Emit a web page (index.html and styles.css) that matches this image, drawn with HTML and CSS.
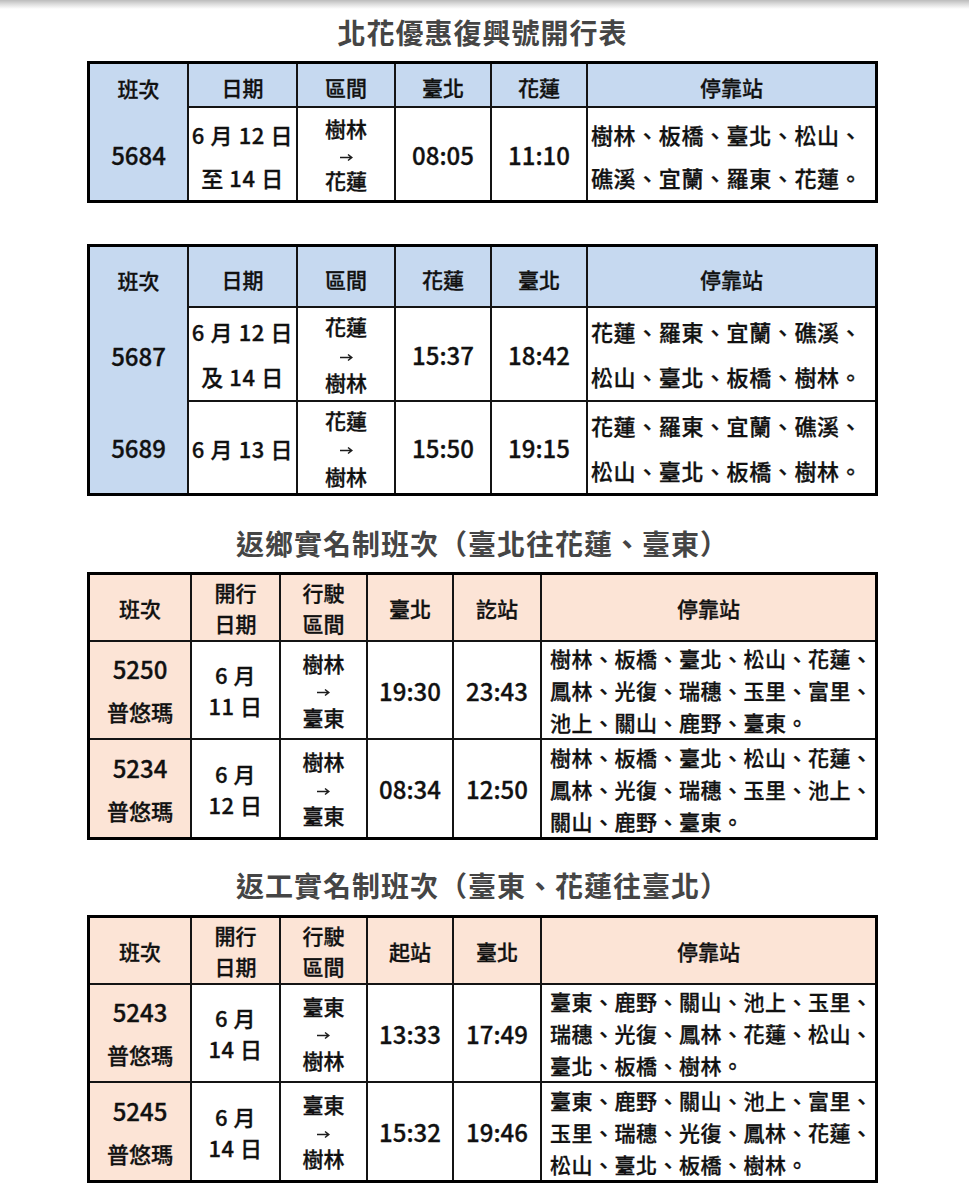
FILE: index.html
```html
<!DOCTYPE html>
<html lang="zh-Hant">
<head>
<meta charset="utf-8">
<title>北花優惠復興號開行表</title>
<link rel="stylesheet" href="styles.css">
</head>
<body>
<div class="page">
  <h1 class="title title-first">北花優惠復興號開行表</h1>
  <table class="tt blue t1">
    <tr class="hr">
      <th class="a1 nob">班次</th><th class="a2">日期</th><th class="a3">區間</th><th class="a4">臺北</th><th class="a5">花蓮</th><th class="a6">停靠站</th>
    </tr>
    <tr class="r93">
      <td class="num">5684</td>
      <td class="date lh43">6 月 12 日<br>至 14 日</td>
      <td class="route lh26">樹林<br><svg class="arr" width="13" height="9" viewBox="0 0 13 9"><path d="M0 4.5H11.5M8 1.5L11.8 4.5L8 7.5" fill="none" stroke="#1c1c1c" stroke-width="1.5"/></svg><br>花蓮</td>
      <td class="time">08:05</td>
      <td class="time">11:10</td>
      <td class="stops lh43">樹林、板橋、臺北、松山、<br>礁溪、宜蘭、羅東、花蓮。</td>
    </tr>
  </table>

  <table class="tt blue t2">
    <tr class="hr2">
      <th class="a1 nob">班次</th><th class="a2">日期</th><th class="a3">區間</th><th class="a4">花蓮</th><th class="a5">臺北</th><th class="a6">停靠站</th>
    </tr>
    <tr class="r94">
      <td class="num nob">5687</td>
      <td class="date2b lh45">6 月 12 日<br>及 14 日</td>
      <td class="route lh28">花蓮<br><svg class="arr" width="13" height="9" viewBox="0 0 13 9"><path d="M0 4.5H11.5M8 1.5L11.8 4.5L8 7.5" fill="none" stroke="#1c1c1c" stroke-width="1.5"/></svg><br>樹林</td>
      <td class="time">15:37</td>
      <td class="time">18:42</td>
      <td class="stops stops-t2 lh45">花蓮、羅東、宜蘭、礁溪、<br>松山、臺北、板橋、樹林。</td>
    </tr>
    <tr class="r91">
      <td class="num">5689</td>
      <td class="date2b">6 月 13 日</td>
      <td class="route lh28">花蓮<br><svg class="arr" width="13" height="9" viewBox="0 0 13 9"><path d="M0 4.5H11.5M8 1.5L11.8 4.5L8 7.5" fill="none" stroke="#1c1c1c" stroke-width="1.5"/></svg><br>樹林</td>
      <td class="time">15:50</td>
      <td class="time">19:15</td>
      <td class="stops stops-t2 lh45">花蓮、羅東、宜蘭、礁溪、<br>松山、臺北、板橋、樹林。</td>
    </tr>
  </table>

  <h2 class="title title-second">返鄉實名制班次（臺北往花蓮、臺東）</h2>
  <table class="tt peach">
    <tr class="hr3">
      <th class="b1">班次</th><th class="b2 lh31">開行<br>日期</th><th class="b3 lh31">行駛<br>區間</th><th class="b4">臺北</th><th class="b5">訖站</th><th class="b6">停靠站</th>
    </tr>
    <tr class="r98">
      <td class="num2"><span class="n">5250</span><span class="k">普悠瑪</span></td>
      <td class="date2 lh31">6 月<br>11 日</td>
      <td class="route lh27">樹林<br><svg class="arr" width="13" height="9" viewBox="0 0 13 9"><path d="M0 4.5H11.5M8 1.5L11.8 4.5L8 7.5" fill="none" stroke="#1c1c1c" stroke-width="1.5"/></svg><br>臺東</td>
      <td class="time">19:30</td>
      <td class="time">23:43</td>
      <td class="stops2">樹林、板橋、臺北、松山、花蓮、<br>鳳林、光復、瑞穗、玉里、富里、<br>池上、關山、鹿野、臺東。</td>
    </tr>
    <tr class="r97">
      <td class="num2"><span class="n">5234</span><span class="k">普悠瑪</span></td>
      <td class="date2 lh31">6 月<br>12 日</td>
      <td class="route lh27">樹林<br><svg class="arr" width="13" height="9" viewBox="0 0 13 9"><path d="M0 4.5H11.5M8 1.5L11.8 4.5L8 7.5" fill="none" stroke="#1c1c1c" stroke-width="1.5"/></svg><br>臺東</td>
      <td class="time">08:34</td>
      <td class="time">12:50</td>
      <td class="stops2">樹林、板橋、臺北、松山、花蓮、<br>鳳林、光復、瑞穗、玉里、池上、<br>關山、鹿野、臺東。</td>
    </tr>
  </table>

  <h2 class="title title-third">返工實名制班次（臺東、花蓮往臺北）</h2>
  <table class="tt peach">
    <tr class="hr3">
      <th class="b1">班次</th><th class="b2 lh31">開行<br>日期</th><th class="b3 lh31">行駛<br>區間</th><th class="b4">起站</th><th class="b5">臺北</th><th class="b6">停靠站</th>
    </tr>
    <tr class="r98">
      <td class="num2"><span class="n">5243</span><span class="k">普悠瑪</span></td>
      <td class="date2 lh31">6 月<br>14 日</td>
      <td class="route lh27">臺東<br><svg class="arr" width="13" height="9" viewBox="0 0 13 9"><path d="M0 4.5H11.5M8 1.5L11.8 4.5L8 7.5" fill="none" stroke="#1c1c1c" stroke-width="1.5"/></svg><br>樹林</td>
      <td class="time">13:33</td>
      <td class="time">17:49</td>
      <td class="stops2">臺東、鹿野、關山、池上、玉里、<br>瑞穗、光復、鳳林、花蓮、松山、<br>臺北、板橋、樹林。</td>
    </tr>
    <tr class="r97">
      <td class="num2"><span class="n">5245</span><span class="k">普悠瑪</span></td>
      <td class="date2 lh31">6 月<br>14 日</td>
      <td class="route lh27">臺東<br><svg class="arr" width="13" height="9" viewBox="0 0 13 9"><path d="M0 4.5H11.5M8 1.5L11.8 4.5L8 7.5" fill="none" stroke="#1c1c1c" stroke-width="1.5"/></svg><br>樹林</td>
      <td class="time">15:32</td>
      <td class="time">19:46</td>
      <td class="stops2">臺東、鹿野、關山、池上、富里、<br>玉里、瑞穗、光復、鳳林、花蓮、<br>松山、臺北、板橋、樹林。</td>
    </tr>
  </table>
</div>
</body>
</html>
```

FILE: styles.css
```css
html, body {
  margin: 0;
  padding: 0;
  background: #fff;
}
body {
  background: linear-gradient(#bcbcbc 0px, #dcdcdc 4px, #ffffff 9px) no-repeat;
  background-size: 100% 10px;
  background-color: #fff;
  font-family: "Noto Sans CJK TC", "Noto Sans CJK SC", sans-serif;
  color: #111;
  min-height: 1200px;
}
.page {
  width: 791px;
  margin-left: 87px;
  padding-top: 17px;
}
.title {
  margin: 0;
  height: 30px;
  line-height: 30px;
  font-size: 28px;
  font-weight: 700;
  letter-spacing: 1px;
  color: #454545;
  text-align: center;
  white-space: nowrap;
}
.title-first { margin-bottom: 14px; }
.title-second { margin-top: 32px; margin-bottom: 14px; }
.title-third { margin-top: 30px; margin-bottom: 15px; }

.tt {
  width: 791px;
  border: 3px solid #000;
  border-collapse: separate;
  border-spacing: 0;
  table-layout: fixed;
  box-sizing: border-box;
}
.t2 { margin-top: 41px; }
.tt th, .tt td {
  box-sizing: border-box;
  padding: 0;
  border-right: 2px solid #141414;
  border-bottom: 2px solid #141414;
  text-align: center;
  vertical-align: middle;
  font-weight: 500;
  font-size: 22px;
  white-space: nowrap;
  -webkit-text-stroke: 0.3px #111;
}
.tt th:last-child, .tt td:last-child { border-right: none; }
.tt tr:last-child td { border-bottom: none; }
.tt th.nob, .tt td.nob { border-bottom: none; }

.tt.blue th { background: #c6d9f0; font-size: 21px; }
.tt.blue td.num { background: #c6d9f0; }
.tt.peach th { background: #fce4d6; font-size: 21px; }
.tt.peach td.num2 { background: #fce4d6; }

.a1 { width: 99px; }
.a2 { width: 109px; }
.a3 { width: 98px; }
.a4 { width: 96px; }
.a5 { width: 96px; }
.a6 { width: 287px; }

.b1 { width: 102px; }
.b2 { width: 89px; }
.b3 { width: 87px; }
.b4 { width: 86px; }
.b5 { width: 88px; }
.b6 { width: 333px; }

.tt .hr th { height: 44px; padding-top: 4px; }
.tt .hr2 th { height: 61px; padding-top: 4px; }
.tt .hr3 th { height: 67px; }
.tt .r93 td { height: 92px; }
.tt .r94 td { height: 94px; }
.tt .r91 td { height: 91px; }
.tt .r98 td { height: 98px; }
.tt .r97 td { height: 97px; }

.tt td.num { font-size: 24px; }
.tt td.date { font-size: 22px; letter-spacing: 0.6px; padding-top: 4px; }
.tt td.date2b { font-size: 22px; letter-spacing: 0.6px; }
.tt .lh43 { line-height: 43px; }
.tt .lh45 { line-height: 45px; }
.tt .lh26 { line-height: 26px; }
.tt .lh27 { line-height: 27px; }
.tt .lh28 { line-height: 28px; }
.tt .lh31 { line-height: 31px; }
.tt td.route { font-size: 21px; }
.arr { display: inline-block; vertical-align: middle; }
.tt td.time { font-size: 24px; }

.tt td.stops {
  text-align: left;
  padding-left: 3px;
  padding-top: 4px;
  font-size: 22px;
  letter-spacing: 0.6px;
}
.tt td.stops-t2 { padding-top: 0; }
.tt td.stops2 {
  text-align: left;
  padding-left: 8px;
  font-size: 21px;
  letter-spacing: 0.5px;
  line-height: 32px;
}
.num2 .n { display: block; font-size: 24px; line-height: 42px; }
.num2 .k { display: block; font-size: 22px; line-height: 42px; }
.tt td.date2 { font-size: 22px; letter-spacing: 0.5px; }
```
